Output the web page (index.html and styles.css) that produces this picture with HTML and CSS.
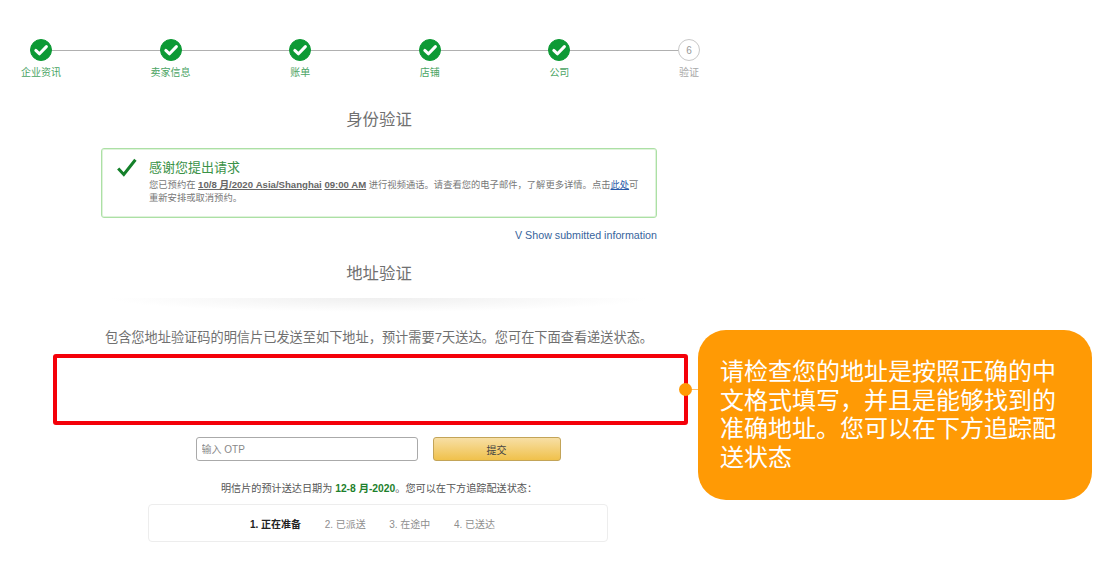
FILE: index.html
```html
<!DOCTYPE html>
<html lang="zh-CN">
<head>
<meta charset="utf-8">
<title>地址验证</title>
<link rel="stylesheet" href="styles.css">
</head>
<body>
<main class="page">
  <ol class="stepper">
    <li class="step done"><span class="dot"><svg viewBox="0 0 22 22" class="tick"><path d="M5.8 11.4l3.7 3.4 6.9-7.2"/></svg></span><span class="step-label">企业资讯</span></li>
    <li class="step done"><span class="dot"><svg viewBox="0 0 22 22" class="tick"><path d="M5.8 11.4l3.7 3.4 6.9-7.2"/></svg></span><span class="step-label">卖家信息</span></li>
    <li class="step done"><span class="dot"><svg viewBox="0 0 22 22" class="tick"><path d="M5.8 11.4l3.7 3.4 6.9-7.2"/></svg></span><span class="step-label">账单</span></li>
    <li class="step done"><span class="dot"><svg viewBox="0 0 22 22" class="tick"><path d="M5.8 11.4l3.7 3.4 6.9-7.2"/></svg></span><span class="step-label">店铺</span></li>
    <li class="step done"><span class="dot"><svg viewBox="0 0 22 22" class="tick"><path d="M5.8 11.4l3.7 3.4 6.9-7.2"/></svg></span><span class="step-label">公司</span></li>
    <li class="step"><span class="dot">6</span><span class="step-label">验证</span></li>
  </ol>

  <section class="column">
    <h2 class="heading first">身份验证</h2>
    <div class="alert">
      <svg class="alert-icon" viewBox="0 0 20 19"><path d="M1.2 10.4l5.6 6 11.6-14.6"/></svg>
      <div class="alert-body">
        <h3 class="alert-title">感谢您提出请求</h3>
        <p class="alert-text">您已预约在 <b class="under">10/8 月/2020 Asia/Shanghai</b> <b class="under">09:00 AM</b> 进行视频通话。请查看您的电子邮件，了解更多详情。点击<a class="inline-link" href="#">此处</a>可<br>重新安排或取消预约。</p>
      </div>
    </div>
    <a class="show-link" href="#">V Show submitted information</a>
    <h2 class="heading second">地址验证</h2>
    <div class="divider"></div>
    <p class="intro">包含您地址验证码的明信片已发送至如下地址，预计需要7天送达。您可在下面查看递送状态。</p>
    <form class="otp">
      <input class="otp-input" type="text" placeholder="输入 OTP">
      <button class="otp-button" type="button">提交</button>
    </form>
    <p class="eta">明信片的预计送达日期为 <b class="eta-date">12-8 月-2020</b>。您可以在下方追踪配送状态：</p>
    <ul class="track">
      <li class="track-item current">1. 正在准备</li>
      <li class="track-item">2. 已派送</li>
      <li class="track-item">3. 在途中</li>
      <li class="track-item">4. 已送达</li>
    </ul>
  </section>
</main>

<div class="highlight"></div>
<span class="pin"></span>
<span class="pin-line"></span>
<aside class="callout">请检查您的地址是按照正确的中文格式填写，并且是能够找到的准确地址。您可以在下方追踪配送状态</aside>
</body>
</html>
```
FILE: styles.css
```css
* { box-sizing: border-box; }
html, body { margin: 0; height: 565px; overflow: hidden; background: #fff; }
body {
  position: relative;
  font-family: "Liberation Sans", "Noto Sans CJK SC", sans-serif;
  color: #555;
}
.page { padding-top: 39px; }

.stepper {
  position: relative;
  list-style: none;
  display: flex;
  justify-content: space-between;
  width: 690px;
  margin: 0 0 0 20px;
  padding: 0;
}
.stepper::before {
  content: "";
  position: absolute;
  left: 21px;
  right: 21px;
  top: 11px;
  height: 1px;
  background: #b0b0b0;
}
.step {
  position: relative;
  width: 42px;
  display: flex;
  flex-direction: column;
  align-items: center;
  gap: 6px;
  color: #a8a8a8;
}
.step.done { color: #4aa463; }
.dot {
  width: 22px;
  height: 22px;
  border-radius: 50%;
  border: 1px solid #c8c8c8;
  background: #fff;
  color: #999;
  font-size: 10px;
  display: flex;
  align-items: center;
  justify-content: center;
}
.done .dot { background: #0d9a35; border-color: #0d9a35; }
.tick { width: 22px; height: 22px; flex: none; }
.tick path { fill: none; stroke: #fff; stroke-width: 3; stroke-linecap: round; stroke-linejoin: round; }
.step-label { font-size: 10px; line-height: 12px; white-space: nowrap; }

.column {
  width: 556px;
  margin-left: 101px;
  display: flex;
  flex-direction: column;
  align-items: center;
}
.heading { margin: 0; font-size: 16.4px; line-height: 22px; font-weight: 400; color: #707070; }
.heading.first { margin-top: 29px; }
.heading.second { margin-top: 20px; }

.alert {
  width: 100%;
  height: 70px;
  margin-top: 18px;
  border: 1px solid #ace0a5;
  border-radius: 3px;
  box-shadow: 0 0 0 1px #dff3db inset;
  padding: 9px 14px 0 15px;
  display: flex;
  gap: 12px;
}
.alert-icon { width: 20px; height: 19px; flex: none; }
.alert-icon path { fill: none; stroke: #14802a; stroke-width: 3; }
.alert-title { margin: 0; font-size: 13px; line-height: 20px; font-weight: 400; color: #3a9247; }
.alert-text { margin: 0; font-size: 9.3px; line-height: 13px; color: #777; white-space: nowrap; }
.under { text-decoration: underline; color: #666; font-size: 9.6px; }
.inline-link { color: #2a5aa8; text-decoration: underline; }
.show-link {
  align-self: flex-end;
  margin-top: 10px;
  font-size: 10.7px;
  line-height: 14px;
  color: #38649c;
  text-decoration: none;
}
.divider {
  width: 540px;
  height: 14px;
  margin-top: 14px;
  background: radial-gradient(ellipse 50% 100% at 50% 0, #efefef, #fff);
}
.intro { margin: 16px 0 0; width: 100%; text-align: center; font-size: 13.2px; line-height: 20px; color: #707070; white-space: nowrap; }

.otp { margin-top: 89px; margin-right: 2px; display: flex; gap: 15px; }
.otp-input {
  width: 222px;
  height: 24px;
  border: 1px solid #aaa;
  border-radius: 3px;
  padding: 0 5px;
  font: 10px "Liberation Sans", "Noto Sans CJK SC", sans-serif;
  color: #555;
}
.otp-input::placeholder { color: #888; opacity: 1; }
.otp-button {
  width: 128px;
  height: 24px;
  border: 1px solid #c3a458;
  border-radius: 3px;
  background: linear-gradient(#f7dfa5, #f0c14b);
  font: 10px "Liberation Sans", "Noto Sans CJK SC", sans-serif;
  color: #444;
  padding: 0;
}
.eta { margin: 21px 0 0; font-size: 10.15px; line-height: 14px; color: #555; white-space: nowrap; }
.eta-date { color: #1d7f2c; font-size: 10.3px; }
.track {
  list-style: none;
  width: 460px;
  height: 38px;
  margin: 8px 0 0;
  padding: 0 0 0 101px;
  border: 1px solid #ededed;
  border-radius: 4px;
  display: flex;
  gap: 23.5px;
  align-items: center;
  transform: translateX(-1px);
}
.track-item { font-size: 10px; color: #8e8e8e; white-space: nowrap; }
.track-item.current { color: #222; font-weight: 700; }

.highlight {
  position: absolute;
  left: 53px;
  top: 354px;
  width: 635px;
  height: 71px;
  border: 4px solid #f40009;
  border-radius: 3px;
}
.pin {
  position: absolute;
  left: 679px;
  top: 383px;
  width: 13px;
  height: 13px;
  border-radius: 50%;
  background: #ff9a05;
}
.pin-line {
  position: absolute;
  left: 692px;
  top: 389px;
  width: 6px;
  height: 1px;
  background: #ffbf66;
}
.callout {
  position: absolute;
  left: 698px;
  top: 330px;
  width: 394px;
  height: 170px;
  padding: 26px 22px 0;
  border-radius: 28px;
  background: #ff9a05;
  color: #fff;
  font-family: "Noto Sans CJK SC", sans-serif;
  font-size: 24px;
  line-height: 28.7px;
}
```
